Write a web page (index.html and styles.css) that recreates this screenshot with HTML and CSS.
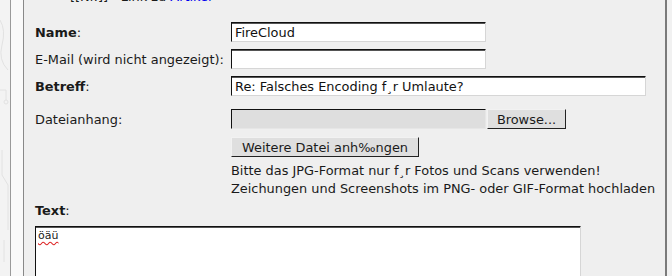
FILE: index.html
```html
<!DOCTYPE html>
<html lang="de">
<head>
<meta charset="UTF-8">
<title>Antwort schreiben</title>
<link rel="stylesheet" href="styles.css">
</head>
<body>
<div class="page">
  <div class="deco">
    <svg width="10" height="276" viewBox="0 0 10 276" fill="none" stroke="#e2e2e2" stroke-width="1">
      <path d="M0 20 Q6 30 2 45 T8 70"/>
      <path d="M0 90 H6 V100"/>
      <circle cx="6" cy="102" r="2"/>
      <path d="M2 150 V175 L8 185 V230"/>
      <path d="M4 240 V262"/>
    </svg>
  </div>
  <div class="gutter"></div>
  <div class="main">
    <div class="ref">[[Nr.]] - Link zu <a href="#">Artikel</a></div>

    <div class="row first">
      <label class="lbl"><b>Name</b>:</label>
      <input class="field short" type="text" value="FireCloud">
    </div>
    <div class="row">
      <label class="lbl">E-Mail (wird nicht angezeigt):</label>
      <input class="field short" type="text">
    </div>
    <div class="row">
      <label class="lbl"><b>Betreff</b>:</label>
      <input class="field long" type="text" value="Re: Falsches Encoding f¸r Umlaute?">
    </div>
    <div class="row upload">
      <label class="lbl">Dateianhang:</label>
      <div class="file">
        <span class="file-name"></span>
        <button class="btn browse" type="button">Browse...</button>
      </div>
    </div>
    <div class="row more">
      <span class="lbl"></span>
      <button class="btn" type="button">Weitere Datei anh‰ngen</button>
    </div>
    <div class="row hint">
      <span class="lbl"></span>
      <p>Bitte das JPG-Format nur f¸r Fotos und Scans verwenden!<br>
      Zeichungen und Screenshots im PNG- oder GIF-Format hochladen</p>
    </div>

    <div class="text-label"><b>Text</b>:</div>
    <div class="textarea"><span class="typo">öäü</span></div>
  </div>
  <div class="edge"></div>
</div>
</body>
</html>
```

FILE: styles.css
```css
body {
  margin: 0;
  background-color: #f3f3f3;
  font-family: "DejaVu Sans", sans-serif;
  font-size: 12.9px;
  color: #1a1a1a;
  overflow: hidden;
}

.page {
  display: flex;
  height: 276px;
}

.deco {
  width: 10px;
  background-color: #f3f3f3;
  border-right: 1px solid #9a9a9a;
}

.gutter {
  width: 12px;
  background-color: #f9f9f9;
  border-right: 1px solid #888;
}

.main {
  width: 630px;
  padding-left: 11px;
  background-color: #efefef;
  border-right: 2px solid #7a7a7a;
}

.edge {
  flex: 1;
  background-color: #f1f1f1;
}

.ref {
  margin-top: -11px;
  margin-left: 35px;
  line-height: 15px;
}

.ref a {
  color: #0000ee;
  text-decoration: none;
}

.row {
  display: flex;
  align-items: center;
  margin-top: 7px;
}

.row.first {
  margin-top: 18px;
}

.row.upload {
  margin-top: 13px;
}

.row.more {
  margin-top: 8px;
}

.row.hint {
  margin-top: 5px;
  align-items: flex-start;
}

.lbl {
  width: 196px;
  flex-shrink: 0;
}

.field {
  box-sizing: border-box;
  height: 20px;
  padding: 0 3px;
  font-family: "DejaVu Sans", sans-serif;
  font-size: 12.9px;
  color: #111;
  background-color: #fff;
  border: 1px solid;
  border-color: #111 #d6d6d6 #d6d6d6 #111;
  box-shadow: inset 0 1px 0 #555;
  outline: none;
}

.field.short {
  width: 255px;
}

.field.long {
  width: 415px;
}

.file {
  display: flex;
  gap: 1px;
}

.file-name {
  box-sizing: border-box;
  width: 255px;
  height: 20px;
  background-color: #dedede;
  border: 1px solid;
  border-color: #111 #e6e6e6 #e6e6e6 #111;
}

.btn {
  box-sizing: border-box;
  height: 20px;
  padding: 0 10px;
  font-family: "DejaVu Sans", sans-serif;
  font-size: 12.9px;
  color: #1a1a1a;
  background-color: #dfdfdf;
  border: 1px solid;
  border-color: #f2f2f2 #222 #222 #f2f2f2;
}

.btn.browse {
  width: 79px;
  padding: 0;
}

.hint p {
  margin: 0;
  line-height: 18px;
}

.text-label {
  margin-top: 5px;
  line-height: 16px;
}

.textarea {
  box-sizing: border-box;
  width: 546px;
  height: 60px;
  margin-top: 7px;
  padding: 2px 2px;
  background-color: #fff;
  border: 1px solid;
  border-color: #111 #d6d6d6 #d6d6d6 #111;
  box-shadow: inset 0 1px 0 #555;
  font-family: "DejaVu Sans", sans-serif;
  font-size: 11px;
  line-height: 13px;
}

.typo {
  text-decoration: underline wavy #d22;
  text-underline-offset: 2px;
}
```
